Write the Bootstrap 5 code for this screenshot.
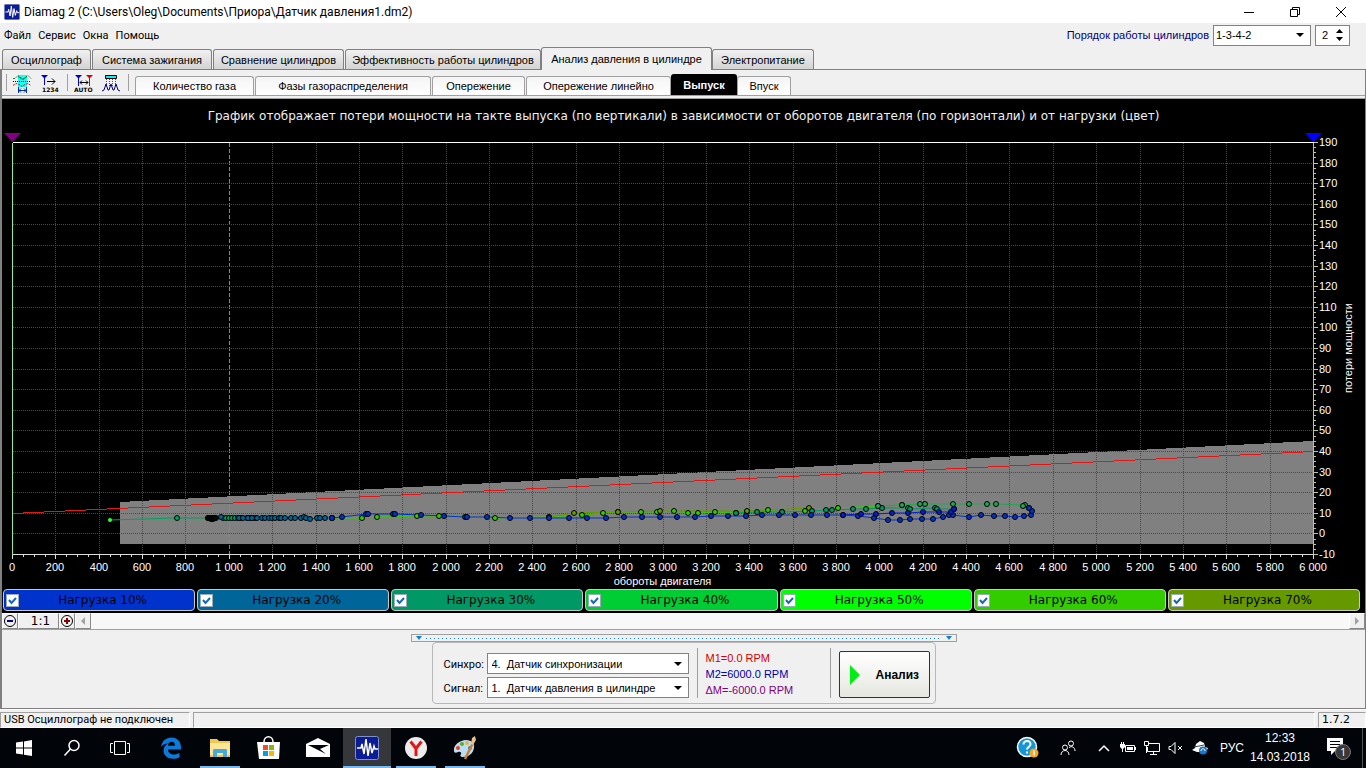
<!DOCTYPE html>
<html lang="ru">
<head>
<meta charset="utf-8">
<meta name="viewport" content="width=device-width, initial-scale=1">
<title>Diamag 2</title>
<link href="https://cdn.jsdelivr.net/npm/bootstrap@5.3.0/dist/css/bootstrap.min.css" rel="stylesheet">
<style>
  body { font: 11px/14px Roboto, sans-serif; color: #000; background: #f0f0f0; }
  svg { display: block; flex: none; }
  button { font: inherit; color: inherit; }
  .ui-text { font-family: "Liberation Sans", sans-serif; font-size: 11px; }
  .wide-text { font-family: "DejaVu Sans", sans-serif; font-size: 12px; }

  .title-bar { height: 23px; background: #fff; font: 12px/16px Roboto, sans-serif; padding-right: 2px; }
  .win-btn { width: 46px; height: 23px; padding: 0; border: 0; background: none; }
  .menu-bar { height: 24px; }
  .menu-bar a { color: #000; text-decoration: none; }
  .menu-list { gap: 7px; padding-top: 2px; }
  .order-label { color: #000080; }

  .form-select.combo {
    width: auto; height: 21px; padding: 0 20px 0 4px; border: 1px solid #828282; border-radius: 0;
    font: 11px/18px "Liberation Sans", sans-serif; color: #000; background-color: #fff;
    background-image: url("data:image/svg+xml,%3csvg xmlns='http://www.w3.org/2000/svg' viewBox='0 0 8 4'%3e%3cpath d='M0 0h8L4 4z'/%3e%3c/svg%3e");
    background-size: 8px 4px; background-position: right 6px center;
  }
  .form-select.combo.order { width: 98px; padding-left: 2px; }
  .spin { width: 35px; height: 21px; border: 1px solid #828282; background: #fff; }
  .spin input { width: 18px; padding: 0 0 0 6px; border: 0; outline: 0; font: 11px/18px "Liberation Sans", sans-serif; }
  .spin button { padding: 2px; border: 0; background: none; }

  .main-tabs { height: 22px; padding-left: 2px; gap: 1px; }
  .main-tabs button {
    height: 20px; padding: 0; border: 1px solid #808080; border-bottom: 0; border-radius: 3px 3px 0 0;
    background: linear-gradient(#f0f0f0, #d4d4d4); white-space: nowrap;
  }
  .main-tabs button.current { height: 23px; margin: 0 -1px -1px; background: #f0f0f0; z-index: 1; }
  .t89 { width: 89px } .t120 { width: 120px } .t131 { width: 131px } .t196 { width: 196px } .t171 { width: 171px } .t102 { width: 102px }

  .workspace { border: 1px solid #808080; border-left-width: 2px; }
  .tool-row { height: 26px; border-bottom: 1px solid #a0a0a0; }
  .tool-group { padding: 4px 6px 0; gap: 8px; }
  .tool-group button { padding: 0; border: 0; background: none; }
  .rule-v { width: 1px; background: #a0a0a0; }
  .sub-tabs { gap: 1px; margin-left: 6px; }
  .sub-tabs button {
    height: 19px; padding: 0; border: 1px solid #a0a0a0; border-bottom: 0; border-radius: 3px 3px 0 0;
    background: linear-gradient(#f4f4f4, #fff); white-space: nowrap;
  }
  .sub-tabs button.current { height: 21px; margin: 0 -1px; background: #000; color: #fff; border-color: #000; font-weight: bold; }
  .s119 { width: 119px } .s176 { width: 176px } .s93 { width: 93px } .s145 { width: 145px } .s66 { width: 66px } .s54 { width: 54px }

  .plot-panel { background: #000; color: #fff; border-top: 1px solid #a0a0a0; margin-top: 2px; min-height: 300px; }
  .plot-title { height: 33px; line-height: 34px; color: #f0f0f0; }
  .plot-box { min-height: 0; overflow: hidden; }
  .plot-box text { font: 11px "Liberation Sans", sans-serif; fill: #fff; }
  .legend-row { gap: 2px; padding: 1px 5px 2px 1px; }
  .legend-item { height: 22px; border: 1px solid #c8c8c8; border-radius: 4px; color: #000; }
  .legend-item input {
    appearance: none; width: 13px; height: 13px; margin: 0 0 0 2px; border: 1px solid #9ab; background: #fff;
    background-image: url("data:image/svg+xml,%3csvg xmlns='http://www.w3.org/2000/svg' viewBox='0 0 11 11'%3e%3cpath d='M2 5l2.5 3L9 3' fill='none' stroke='%231668b8' stroke-width='2'/%3e%3c/svg%3e");
  }

  .scroll-row { height: 17px; border-bottom: 1px solid #a0a0a0; background: #f8f8f8; }
  .scroll-row button { padding: 0; border: 1px solid; border-color: #fff #888 #888 #fff; background: #f0f0f0; }
  .splitter { width: 546px; height: 8px; margin-top: 4px; border: 1px solid #a0a0a0; }
  .splitter i { height: 1px; background: repeating-linear-gradient(90deg, #1080c8 0 1px, transparent 1px 4px); }
  .controls { border: 1px solid #b8b8b8; border-radius: 4px; padding: 5px 5px 5px 11px; margin-bottom: 4px; }
  .controls .combo { width: 202px; }
  .controls label { width: 43px; line-height: 23px; height: 21px; }
  .markers { width: 132px; line-height: 16px; padding: 2px 0 0 8px; }
  .run-btn { width: 91px; height: 47px; border: 1px solid #123a5c; border-radius: 2px; background: linear-gradient(#fff, #e6e7e0); font: bold 12px "Liberation Sans", sans-serif; }

  .status-bar { height: 19px; gap: 3px; padding-top: 2px; border-top: 1px solid #fff; }
  .status-bar > div { border: 1px solid; border-color: #a0a0a0 #fff #fff #a0a0a0; padding-left: 3px; line-height: 14px; }
  .version { width: 48px; font: 11px "DejaVu Sans", sans-serif; }

  .task-bar { height: 40px; background: #010409; color: #fff; }
  .task-bar button { width: 48px; height: 40px; padding: 0; border: 0; background: none; display: flex; align-items: center; justify-content: center; }
  .task-bar .apps { gap: 1px; margin-left: 3px; }
  .task-bar .open { background: linear-gradient(#76b9ed, #76b9ed) center bottom / 40px 2px no-repeat; }
  .task-bar .active { background: linear-gradient(#76b9ed, #76b9ed) center bottom / 48px 2px no-repeat #35373a; }
  .task-bar .tray button { width: 24px; }
  .people { margin-right: 12px; }
  .clock { width: 72px; font: 12px/19px "Liberation Sans", sans-serif; }
  .clock.lang { width: auto; }
  .desk-edge { width: 4px; height: 40px; border-left: 1px solid #555; margin-left: 6px; }
</style>
</head>
<body class="d-flex flex-column vh-100">

<header class="title-bar d-flex align-items-center">
  <svg class="mx-1" width="16" height="16" viewBox="0 0 24 24" style="margin-left:2px"><use href="#wave-icon"/></svg>
  <span class="text-nowrap">Diamag 2 (C:\Users\Oleg\Documents\Приора\Датчик давления1.dm2)</span>
  <div class="ms-auto d-flex">
    <button class="win-btn" aria-label="Свернуть"><svg class="mx-auto" width="12" height="12"><path d="M1 6.5h10" stroke="#000"/></svg></button>
    <button class="win-btn" aria-label="Развернуть"><svg class="mx-auto" width="12" height="12" fill="none" stroke="#000"><path d="M1.5 3.5h7v7h-7zM3.500 3.500v-2h7v7h-2"/></svg></button>
    <button class="win-btn" aria-label="Закрыть"><svg class="mx-auto" width="12" height="12"><path d="M1 1l10 10M11 1L1 11" stroke="#000"/></svg></button>
  </div>
</header>

<nav class="menu-bar d-flex align-items-center ps-1 pe-3">
  <div class="menu-list d-flex">
    <a href="#">Файл</a><a href="#">Сервис</a><a href="#">Окна</a><a href="#">Помощь</a>
  </div>
  <div class="ms-auto d-flex align-items-center ui-text gap-1">
    <label class="order-label" for="order">Порядок работы цилиндров</label>
    <select class="form-select combo order" id="order"><option>1-3-4-2</option></select>
    <div class="spin d-flex align-items-center">
      <input type="text" value="2" aria-label="Цилиндр">
      <div class="d-flex flex-column">
        <button aria-label="Больше"><svg width="7" height="4"><path d="M0 4h7L3.500 0z"/></svg></button>
        <button aria-label="Меньше"><svg width="7" height="4"><path d="M0 0h7L3.500 4z"/></svg></button>
      </div>
    </div>
  </div>
</nav>

<div class="main-tabs ui-text d-flex align-items-end" role="tablist">
  <button class="t89" role="tab">Осциллограф</button>
  <button class="t120" role="tab">Система зажигания</button>
  <button class="t131" role="tab">Сравнение цилиндров</button>
  <button class="t196" role="tab">Эффективность работы цилиндров</button>
  <button class="t171 current position-relative" role="tab" aria-selected="true">Анализ давления в цилиндре</button>
  <button class="t102" role="tab">Электропитание</button>
</div>

<main class="workspace flex-grow-1 d-flex flex-column">
  <div class="tool-row d-flex">
    <div class="rule-v my-1 ms-1"></div>
    <div class="tool-group d-flex align-items-start">
      <button aria-label="Кривые"><svg width="20" height="20" fill="none">
        <path d="M5 1h9v12H5z" fill="#1ff"/><path d="M0 4.500h2l3-3 4 3h2l4-3 3 3" stroke="#188038" stroke-dasharray="2 1"/><path d="M5 2.500l3 2 2 1 4-3" stroke="#188038"/>
        <path d="M0 7.500h18" stroke="#000" stroke-dasharray="1 1"/><path d="M0 11.500l3-2 3 1 3 2 3-2 3-1 3 2" stroke="#e01010" stroke-dasharray="2 1"/>
        <path d="M5.500 13v6M13.500 13v6M6 16.500h7M8 14.500l-2 2 2 2M11 14.500l2 2-2 2" stroke="#0030a0"/></svg></button>
      <button aria-label="Нумерация"><svg width="20" height="20">
        <path d="M0 1h7L4 4v7H3V4z" fill="#00c"/><path d="M6 7.500h8M11 4.500l3 3-3 3" stroke="#000" fill="none"/>
        <text x="1" y="18" font-family="DejaVu Sans" font-size="6" font-weight="bold">1234</text></svg></button>
    </div>
    <div class="rule-v my-1"></div>
    <div class="tool-group d-flex align-items-start">
      <button aria-label="Авто"><svg width="20" height="20">
        <path d="M1 1h7L5 4v8H4V4z" fill="#00c"/><path d="M12 1h7l-3 3v8h-1V4z" fill="#d00"/>
        <path d="M6 8.500h8M8 6.500l-2 2 2 2M12 6.500l2 2-2 2" stroke="#000" fill="none"/>
        <text x="0" y="18" font-family="DejaVu Sans" font-size="6" font-weight="bold">AUTO</text></svg></button>
      <button aria-label="Импульсы"><svg width="20" height="20" fill="none">
        <path d="M3.500 1.500h11v3h-11z" fill="#1ee" stroke="#000"/><path d="M4.500 5v5M7.500 5v8M10.500 5v8M13.500 5v5" stroke="#555" stroke-dasharray="1 1"/>
        <path d="M0 17l2-1 2-6 2 6h1l2-6 2 6h1l2-6 2 6 2 1" stroke="#000080"/></svg></button>
    </div>
    <div class="rule-v my-1"></div>
    <div class="sub-tabs ui-text d-flex align-items-end" role="tablist">
      <button class="s119" role="tab">Количество газа</button>
      <button class="s176" role="tab">Фазы газораспределения</button>
      <button class="s93" role="tab">Опережение</button>
      <button class="s145" role="tab">Опережение линейно</button>
      <button class="s66 current" role="tab" aria-selected="true">Выпуск</button>
      <button class="s54" role="tab">Впуск</button>
    </div>
  </div>

  <section class="plot-panel flex-grow-1 d-flex flex-column">
    <div class="plot-title wide-text text-center text-nowrap">График отображает потери мощности на такте выпуска (по вертикали) в зависимости от оборотов двигателя (по горизонтали) и от нагрузки (цвет)</div>
    <div class="plot-box flex-grow-1" id="plot"></div>
    <div class="legend-row wide-text d-flex" id="legend"></div>
  </section>

  <div class="scroll-row d-flex">
    <button aria-label="Уменьшить"><svg width="14" height="14" fill="none"><circle cx="7" cy="7" r="5.500" stroke="#000"/><path d="M4 7h6" stroke="#000080" stroke-width="2"/></svg></button>
    <button class="wide-text px-2">&nbsp;1:1</button>
    <button aria-label="Увеличить"><svg width="14" height="14" fill="none"><circle cx="7" cy="7" r="5.500" stroke="#000"/><path d="M4 7h6M7 4v6" stroke="#800000" stroke-width="2"/></svg></button>
    <button aria-label="Влево"><svg width="14" height="14"><path d="M9 3v8L5 7z" fill="#a0a0a0"/></svg></button>
    <button class="ms-auto" aria-label="Вправо"><svg width="14" height="14"><path d="M5 3v8l4-4z" fill="#a0a0a0"/></svg></button>
  </div>

  <div class="splitter align-self-center d-flex align-items-center px-1 gap-1">
    <svg width="6" height="4"><path d="M0 0h6L3 4z" fill="#1080c8"/></svg><i class="flex-grow-1"></i><svg width="6" height="4"><path d="M0 0h6L3 4z" fill="#1080c8"/></svg>
  </div>
  <section class="controls align-self-center d-flex">
    <div class="d-flex flex-column justify-content-end" style="gap:3px">
      <div class="d-flex"><label for="sync">Синхро:</label><select class="form-select combo" id="sync"><option>4.&nbsp; Датчик синхронизации</option></select></div>
      <div class="d-flex"><label for="sig">Сигнал:</label><select class="form-select combo" id="sig"><option>1.&nbsp; Датчик давления в цилиндре</option></select></div>
    </div>
    <div class="rule-v ms-2"></div>
    <div class="markers ui-text">
      <div style="color:#d00000">M1=0.0 RPM</div>
      <div style="color:#0000a8">M2=6000.0 RPM</div>
      <div style="color:#800080">ΔM=-6000.0 RPM</div>
    </div>
    <div class="rule-v me-2"></div>
    <button class="run-btn d-flex align-items-center align-self-end">
      <svg class="ms-1 me-3" width="10" height="20"><path d="M0 0v20L10 10z" fill="#0e1"/></svg>Анализ
    </button>
  </section>
</main>

<footer class="status-bar d-flex">
  <div style="width:190px">USB Осциллограф не подключен</div>
  <div class="flex-grow-1"></div>
  <div class="version">1.7.2</div>
</footer>

<div class="task-bar d-flex align-items-center">
  <button aria-label="Пуск"><svg width="16" height="16" fill="#fff"><path d="M0 2.500l7-1v6H0zM8 1.400L16 0v7.500H8zM0 8.500h7v6l-7-1zM8 8.500h8V16l-8-1.300z"/></svg></button>
  <button aria-label="Поиск"><svg width="18" height="18" fill="none" stroke="#fff" stroke-width="1.500"><circle cx="11" cy="6.500" r="5"/><path d="M7.500 10L1.500 16.500"/></svg></button>
  <button aria-label="Представление задач"><svg width="20" height="16" fill="none" stroke="#fff"><path d="M4.500 1.500h11v13h-11zM3 3.500H.5v9H3M17 3.500h2.500v9H17"/></svg></button>
  <div class="apps d-flex">
    <button aria-label="Edge"><svg width="22" height="22"><path d="M1 10C2 4 6 .5 11.500 .5 17.500 .5 21 5 21 10v2.500H8c0 3.500 3 5 6 5 2 0 4-.6 5.500-1.500v4.300c-2 1-4.200 1.500-6.500 1.500C7 21.800 3.500 18 3.500 13.500c0-3 1.800-5.700 4.800-7C5 6.600 2.500 8 1 10zM8 8.700h7c0-2.500-1.300-4-3.500-4S8.300 6.300 8 8.700z" fill="#0a7bdc"/></svg></button>
    <button class="open" aria-label="Проводник"><svg width="22" height="20"><path d="M1 1h7l2 2h11v16H1z" fill="#f0c850"/><path d="M1 5h20v12H1z" fill="#fbe596"/><path d="M4 19v-7l1-1h12l1 1v7h-4v-4H8v4z" fill="#46a8dc"/></svg></button>
    <button aria-label="Магазин"><svg width="24" height="24" fill="none"><path d="M0 6h23l-1 17H2z" fill="#fff"/><path d="M7 6c0-7 9-7 9 0" stroke="#fff" stroke-width="1.500"/><path d="M6 9h5v5H6z" fill="#f05020"/><path d="M12 9h5v5h-5z" fill="#80b810"/><path d="M6 15h5v5H6z" fill="#00a0e8"/><path d="M12 15h5v5h-5z" fill="#f8b800"/></svg></button>
    <button aria-label="Почта"><svg width="24" height="20"><path d="M0 6L12 0l12 6v13H0z" fill="#fff"/><path d="M2 7h21l-9 4 6 5z" fill="#010409"/></svg></button>
    <button class="active" aria-label="Diamag"><svg width="24" height="24" viewBox="0 0 24 24"><g id="wave-icon"><rect x=".5" y=".5" width="23" height="23" rx="2" fill="#0a1c98" stroke="#8090c8"/><path d="M2 12h4l1-4 2 10L11 3l2 17 2-13 2 10 2-7 1 3h3" fill="none" stroke="#fff" stroke-width="1.500"/></g></svg></button>
    <button class="open" aria-label="Яндекс"><svg width="22" height="22"><circle cx="11" cy="11" r="11" fill="#ececec"/><path d="M5.500 4.500L11 11.500l5.500-7M11 11v8" fill="none" stroke="#e01818" stroke-width="3"/></svg></button>
    <button class="open" aria-label="Paint"><svg width="24" height="24"><path d="M1 15C0 9 7 4 13 4c6 0 9 4 8 8-1 6-6 9-11 9-3 0-3-2-2-3s-1-3-3-2-4 1-4-1z" fill="#bcdcf0"/><circle cx="5" cy="12" r="2" fill="#e04020"/><circle cx="9" cy="8" r="2" fill="#60a830"/><circle cx="14" cy="7" r="2" fill="#f0b030"/><circle cx="17" cy="12" r="2" fill="#3878d0"/><path d="M12 23l8-16" stroke="#c88038" stroke-width="2.500"/><path d="M18 8l1-6 3-2 1 4-3 5z" fill="#e8c090"/></svg></button>
  </div>
  <div class="tray d-flex align-items-center ms-auto">
    <button class="me-3" aria-label="Справка"><svg width="24" height="24"><circle cx="11" cy="11" r="9.500" fill="#1596d8" stroke="#fff" stroke-width="1.500"/><path d="M7.500 8.500c0-5 7.500-4.500 7 0-.3 2.500-3.500 2.500-3.500 5M11 15.500v2" fill="none" stroke="#fff" stroke-width="2"/><circle cx="18" cy="17" r="4.500" fill="#f4a820"/><path d="M18 14.500v5" stroke="#fff" stroke-width="1.500"/></svg></button>
    <button class="people" aria-label="Люди"><svg width="16" height="16" fill="none" stroke="#fff"><circle cx="5" cy="7.500" r="2.500"/><path d="M1 15c0-6 8-6 8 0"/><circle cx="11" cy="3.500" r="2.500"/><path d="M9 7.500c3-2 6 0 6 3.500"/></svg></button>
    <button aria-label="Скрытые значки"><svg width="12" height="8"><path d="M1 7l5-5 5 5" stroke="#fff" fill="none" stroke-width="1.500"/></svg></button>
    <button aria-label="Батарея"><svg width="16" height="12"><path d="M5.500 3.500h9v6h-9z" fill="none" stroke="#fff"/><path d="M7 5h6v3H7zM15 5h1v3h-1zM0 2h5v3L3 7v3H2V7L0 5zM1 0h1v2H1zM3 0h1v2H3z" fill="#fff"/></svg></button>
    <button aria-label="Сеть"><svg width="16" height="14" fill="none" stroke="#fff"><path d="M4 2.500h11.500v8H3.500V6M9.500 10v3M6 13.500h7M.5 .5h4v4h-4zM2.500 5v7"/></svg></button>
    <button aria-label="Звук"><svg width="16" height="12" fill="none" stroke="#fff"><path d="M1 4.500h2l4-4v11l-4-4H1zM10 4l4 4M14 4l-4 4"/></svg></button>
    <button class="me-2" aria-label="OneDrive"><svg width="16" height="14"><path d="M0 9l3-2 1-4 4-3 4 2 1 4 3 1-2 4H5z" fill="#fff"/><path d="M2 6l10-2" stroke="#345" /><circle cx="11" cy="9.500" r="4" fill="#1878c8"/><path d="M9 10c0-3 4-3 4 0" fill="none" stroke="#fff"/></svg></button>
    <span class="clock lang">РУС</span>
    <div class="clock text-center me-2">12:33<br>14.03.2018</div>
    <button class="me-2" aria-label="Уведомления"><svg class="ms-2" width="26" height="26"><path d="M0 3h16v13H8l-4 4v-4H0z" fill="#fff"/><path d="M3 6.500h10M3 9.500h10M3 12.500h7" stroke="#010409"/><circle cx="16" cy="17" r="7.500" fill="#383838" stroke="#777"/><text x="13" y="21" fill="#fff" font-family="Open Sans" font-size="11">1</text></svg></button>
    <div class="desk-edge"></div>
  </div>
</div>

<script src="https://cdn.jsdelivr.net/npm/bootstrap@5.3.0/dist/js/bootstrap.bundle.min.js"></script>
<script>
  const loadColors = ['#0033cc', '#006699', '#009966', '#00cc33', '#00ff00', '#33cc00', '#669900'];
  document.getElementById('legend').innerHTML = loadColors.map((c, i) =>
    `<label class="legend-item d-flex align-items-center flex-fill" style="background:${c}">` +
    `<input type="checkbox" checked><span class="flex-grow-1 text-center pe-2">Нагрузка ${(i + 1) * 10}%</span></label>`).join('');

  // Sample runs by colour; positions are on a sheet whose plot area is 1301 x 412 from (12, 142).
  const runs = [
    ['#00a060', [[110,520],[177,518],[208,518],[216,518],[223,518],[226,518],[229,518],[232,518],[235,518],[238,518],[241,518]]],
    ['#001008', [[208,518],[209,518],[210,518],[211,519],[212,518],[213,519],[214,518],[215,518],[247,518],[250,518],[253,518],[256,518]]],
    ['#006699', [[221,517],[239,518],[243,518],[248,518],[252,518],[257,518],[262,518],[265,518],[269,518],[272,518],[275,518],[279,518],[281,518],[285,518],[291,518],[295,518],[301,518],[304,517],[306,518],[310,519],[317,518],[320,518],[325,518],[332,518]]],
    ['#33cc00', [[332,518],[362,518],[377,517],[417,516],[439,516],[466,517],[495,518],[549,517],[582,515],[603,513],[618,512],[641,512],[657,512],[674,511],[688,513],[698,513],[715,512],[736,513],[747,512],[768,510],[782,512],[805,511],[838,508],[878,506],[902,505]]],
    ['#669900', [[549,517],[574,513],[618,512],[660,511],[747,511],[809,508]]],
    ['#009966', [[736,513],[757,512],[782,512],[812,511],[826,510],[832,510],[853,509],[866,509],[882,508],[908,508],[910,509],[935,508],[937,509],[954,509]]],
    ['#20a850', [[878,506],[902,505],[920,504],[925,504],[953,504],[969,504],[987,504],[996,504],[1025,505],[1023,506],[1029,508]]],
    ['#0033cc', [[332,518],[342,517],[366,514],[368,514],[393,514],[395,514],[421,515],[444,516],[465,517],[467,517],[487,517],[510,518],[530,518],[549,518],[569,518],[587,518],[606,518],[624,517],[642,517],[660,517],[677,517],[695,517],[711,516],[728,516],[746,516],[762,515],[779,515],[795,515],[811,515],[827,515],[843,515],[858,516],[874,518],[888,520],[900,520],[910,519],[922,519],[933,519],[943,517],[949,515],[953,515],[969,517],[981,515],[994,516],[1005,516],[1015,517],[1024,516],[1031,515],[1032,511],[1029,508]]],
    ['#0020d0', [[843,515],[861,514],[876,514],[892,513],[908,513],[923,512],[939,512],[951,512],[954,509]]]
  ];

  function draw() {
    const box = document.getElementById('plot');
    box.innerHTML = '';
    const W = box.clientWidth, H = box.clientHeight;
    const L = 10, R = W - 52, T = 10, B = H - 34;
    const X = v => Math.round(L + v * (R - L) / 6000);
    const Y = v => Math.round(B - (v + 10) * (B - T) / 200);
    const sx = x => L + (x - 12) * (R - L) / 1301, sy = y => T + (y - 142) * (B - T) / 412;
    const line = (x1, y1, x2, y2, c, d) => `<path d="M${x1 + .5} ${y1 + .5}L${x2 + .5} ${y2 + .5}" stroke="${c}" ${d ? `stroke-dasharray="${d}"` : ''}/>`;
    let s = `<g shape-rendering="crispEdges" fill="none"><path d="M${X(500)} ${Y(15.300)}L${R} ${Y(45)}V${Y(-5)}H${X(500)}z" fill="#808080"/>`;
    for (let v = 200; v < 6000; v += 200) s += line(X(v), T, X(v), B, v === 1000 ? '#888' : '#4a4a4a', v === 1000 ? '4 2' : '1 1');
    for (let v = 0; v < 190; v += 10) s += line(L, Y(v), R, Y(v), '#4a4a4a', '1 1');
    s += line(L, Y(10), R, Y(40), '#e01818');
    for (let v = 0; v <= 6000; v += 50) s += line(X(v), B, X(v), B + (v % 200 ? 2 : 4), '#ddd');
    for (let v = -10; v <= 190; v += 2.5) s += line(R, Y(v), R + (v % 10 ? 2 : 4), Y(v), '#c8c880');
    s += line(L, T, R, T, '#fff') + line(L, B, R, B, '#ddd') + line(L, T, L, B, '#90ee90') + line(R, T, R, B, '#c8c860');
    s += `</g><path d="M${L - 8} ${T - 9}h17l-8.500 9z" fill="#800080"/><path d="M${R - 8} ${T - 9}h17l-8.500 9z" fill="#00f"/>`;
    for (const [c, p] of runs) s += `<polyline fill="none" stroke="${c}" points="${p.map(q => sx(q[0]) + ',' + sy(q[1])).join(' ')}"/>`;
    for (const [c, p] of runs) for (const q of p)
      s += q[0] === 110 ? `<circle cx="${sx(110)}" cy="${sy(520)}" r="2" fill="#3f3"/>`
        : `<circle cx="${sx(q[0])}" cy="${sy(q[1])}" r="2.500" fill="${c}" stroke="#000"/>`;
    for (let v = 0; v <= 6000; v += 200) {
      const t = v < 1000 ? v : Math.floor(v / 1000) + '\u00a0' + String(v % 1000).padStart(3, '0');
      s += `<text x="${X(v)}" y="${B + 17}" text-anchor="middle">${t}</text>`;
    }
    for (let v = -10; v <= 190; v += 10) s += `<text x="${R + 6}" y="${Y(v) + 4}">${v}</text>`;
    s += `<text x="${(L + R) / 2}" y="${B + 31}" text-anchor="middle">обороты двигателя</text>`;
    s += `<text transform="translate(${R + 39} ${(T + B) / 2}) rotate(-90)" text-anchor="middle">потери мощности</text>`;
    box.innerHTML = `<svg width="${W}" height="${H}">${s}</svg>`;
  }
  draw();
  addEventListener('resize', draw);
</script>
</body>
</html>
